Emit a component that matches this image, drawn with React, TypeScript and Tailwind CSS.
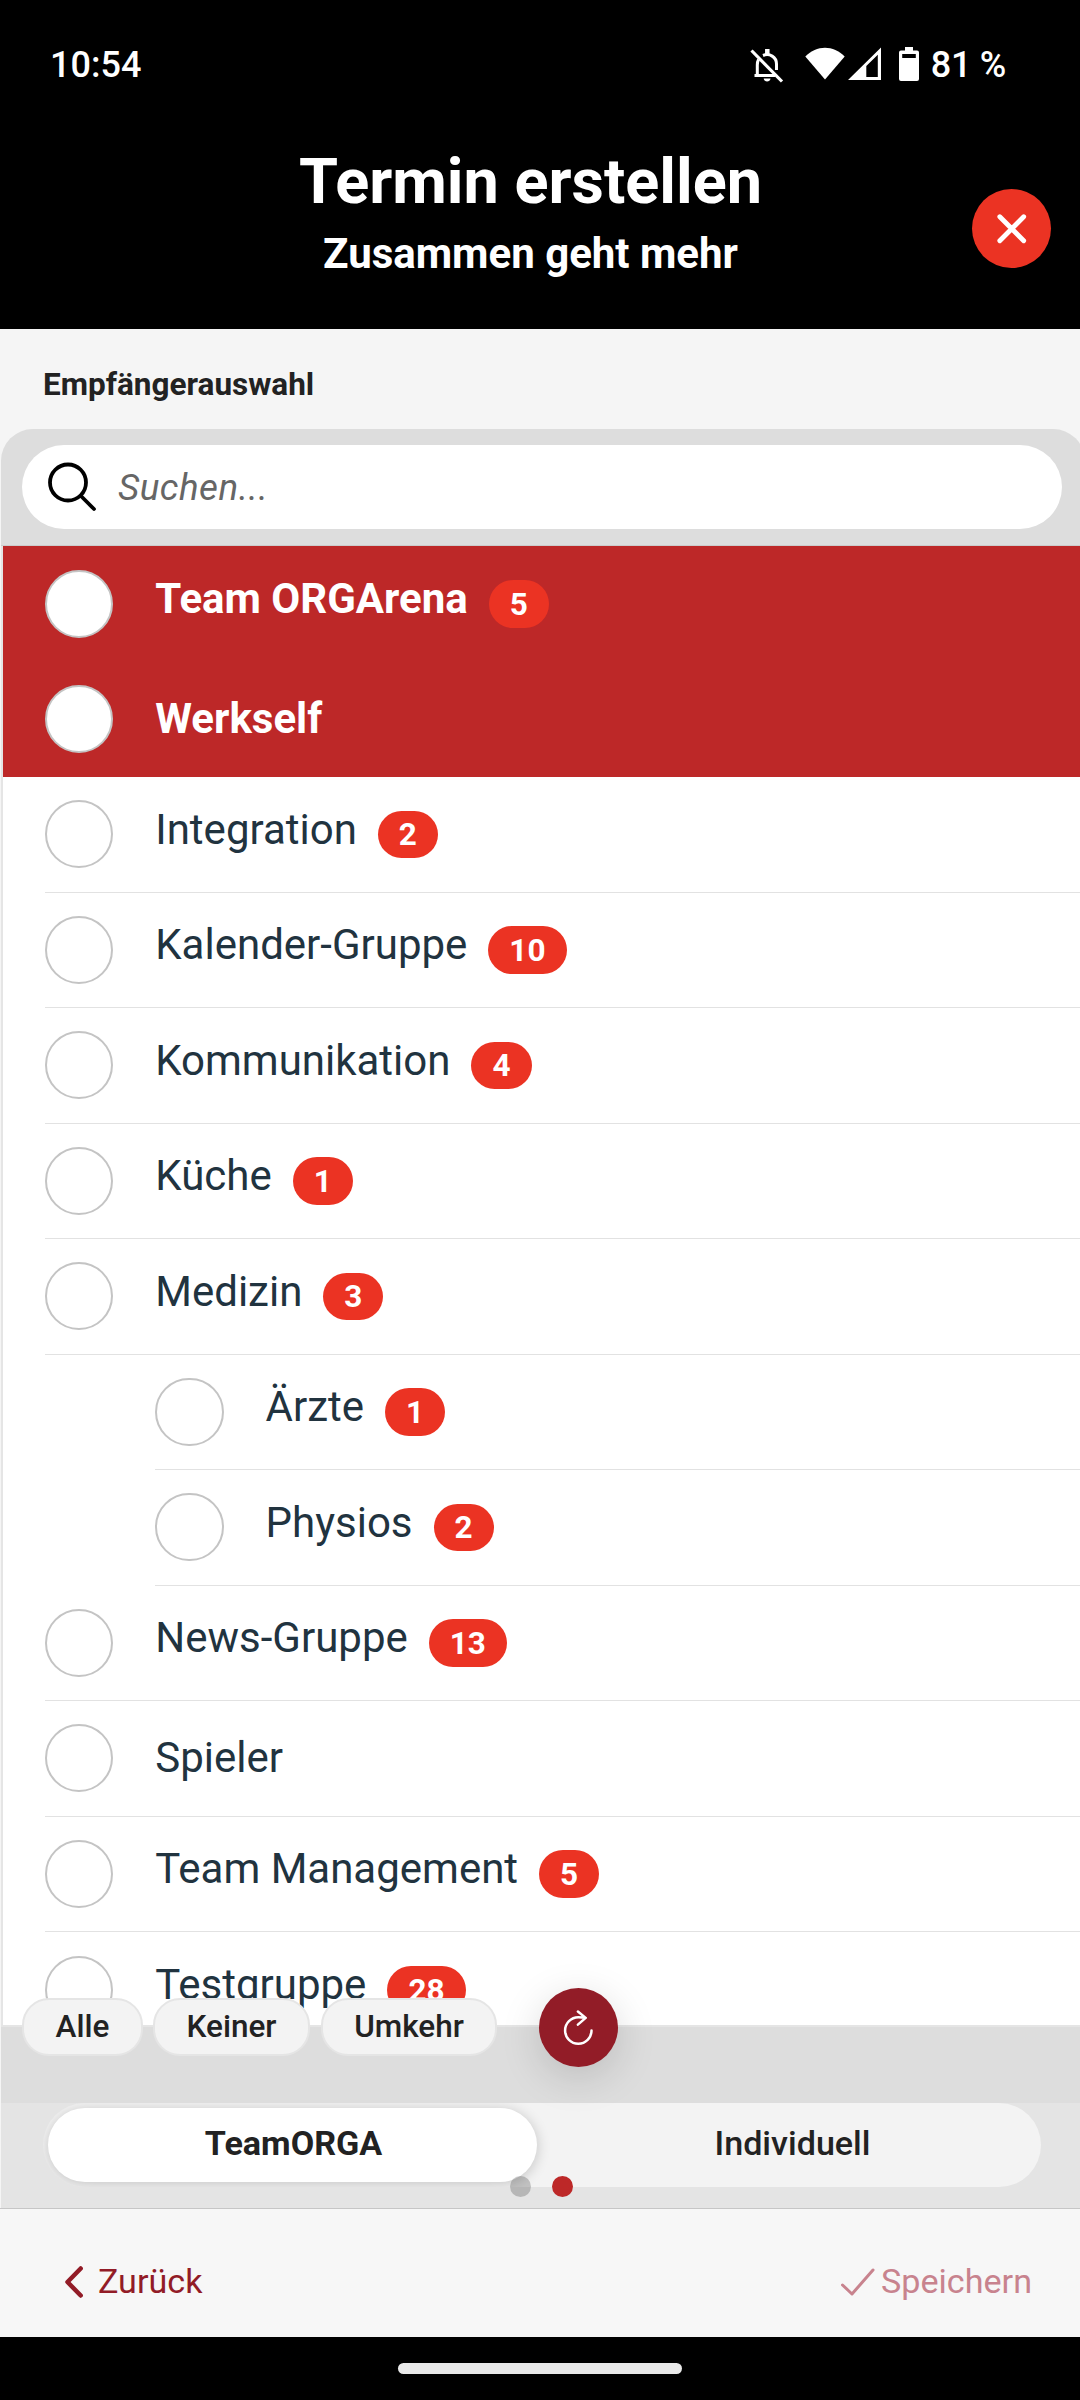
type Group = { name: string; count?: number; child?: boolean; highlight?: boolean };

const groups: Group[] = [
  { name: "Team ORGArena", count: 5, highlight: true },
  { name: "Werkself", highlight: true },
  { name: "Integration", count: 2 },
  { name: "Kalender-Gruppe", count: 10 },
  { name: "Kommunikation", count: 4 },
  { name: "Küche", count: 1 },
  { name: "Medizin", count: 3 },
  { name: "Ärzte", count: 1, child: true },
  { name: "Physios", count: 2, child: true },
  { name: "News-Gruppe", count: 13 },
  { name: "Spieler" },
  { name: "Team Management", count: 5 },
  { name: "Testgruppe", count: 28 },
];

function StatusBar() {
  return (
    <div className="flex h-[130px] items-start justify-between pl-[50px] pr-[74px] pt-[43px] text-[36px] font-medium leading-[44px]">
      <span>10:54</span>
      <div className="flex items-start">
        <svg className="mt-[5px] mr-[21px] h-[35px] w-[34px]" viewBox="0 0 34 35" fill="none" stroke="currentColor" strokeWidth="3">
          <path d="M1.500 2.500L32 33.500" strokeWidth="3.200" />
          <path d="M8.500 11.500C7.600 13.200 7.300 15 7.300 17V27M4.500 27.500H25" />
          <path d="M13 7.500C19.500 4.800 26.500 9 26.500 16V22" />
          <path d="M17.300 1V7" strokeWidth="4.500" />
          <path d="M13.700 30.500H20.500C20.300 34.500 13.900 34.500 13.700 30.500Z" fill="currentColor" stroke="none" />
        </svg>
        <svg className="mt-[4px] h-[35px] w-[40px]" viewBox="0 0 40 35" fill="currentColor">
          <path d="M0.300 9.500C11.500-2.300 28.500-2.300 39.700 9.500L20 32.500Z" />
        </svg>
        <svg className="ml-[3px] mr-[16px] mt-[4px] h-[35px] w-[34px]" viewBox="0 0 34 35" fill="currentColor" fillRule="evenodd">
          <path d="M0 33L33 0.500V33ZM18.300 19V30H29.800V7.800Z" />
        </svg>
        <svg className="mr-[11px] mt-[4px] h-[34px] w-[22px]" viewBox="0 0 22 34" fill="currentColor" fillRule="evenodd">
          <path d="M7 0H15V3.500H19Q21 3.500 21 5.500V32Q21 34 19 34H3Q1 34 1 32V5.500Q1 3.500 3 3.500H7ZM4.200 7V11H17.800V7Z" />
        </svg>
        <span className="whitespace-pre tracking-[-0.3px]">81 %</span>
      </div>
    </div>
  );
}

function Header() {
  return (
    <header className="relative h-[329px] bg-black text-white">
      <StatusBar />
      <div className="flex w-[1061px] flex-col items-center">
        <h1 className="mt-[16px] text-[63px] font-bold leading-[72px]">Termin erstellen</h1>
        <p className="mt-[11px] text-[42px] font-bold leading-[50px]">Zusammen geht mehr</p>
      </div>
      <button className="absolute left-[972px] top-[189px] flex size-[79px] items-center justify-center rounded-full bg-[#eb3323]">
        <svg className="size-[30px]" viewBox="0 0 30 30" fill="none" stroke="currentColor" strokeWidth="4.800" strokeLinecap="round">
          <path d="M2.800 2.800L26.700 26.700M26.700 2.800L2.800 26.700" />
        </svg>
      </button>
    </header>
  );
}

function SearchField() {
  return (
    <div className="h-[117px] rounded-t-[32px] border-b border-[#cccccc] bg-[#dddddd] pl-[21px] pt-[16px]">
      <div className="flex h-[84px] w-[1040px] items-center rounded-full bg-white pl-[26px]">
        <svg className="h-[50px] w-[50px] shrink-0 text-black" viewBox="0 0 50 50" fill="none" stroke="currentColor" strokeWidth="3.800" strokeLinecap="round">
          <circle cx="20" cy="20.500" r="18" />
          <path d="M33 34L46 47" />
        </svg>
        <span className="ml-[20px] pt-px text-[36.750px] italic leading-[44px] tracking-[0.500px] text-[#666666]">Suchen...</span>
      </div>
    </div>
  );
}

function Row({ group, last }: { group: Group; last: boolean }) {
  const { name, count, child, highlight } = group;
  return (
    <li className={`${highlight ? "bg-[#bd2828] font-bold text-white" : "text-[#21333f]"} ${child ? "pl-[152.250px]" : "pl-[42px]"}`}>
      <div className={`flex h-[115.500px] items-center ${highlight || last ? "" : "border-b border-[#e2e2e2]"}`}>
        <span className="size-[68.250px] shrink-0 rounded-full border-2 border-[#c4c4c4] bg-white" />
        <span className={`ml-[42px] text-[42px] leading-[50px] ${count ? "pb-[9px]" : ""}`}>{name}</span>
        {count && (
          <span className="ml-[21px] flex h-[47.500px] items-center rounded-full bg-[#eb3323] px-[21px] pt-px text-[31.500px] font-bold leading-none text-white">
            {count}
          </span>
        )}
      </div>
    </li>
  );
}

function Actions() {
  return (
    <div className="absolute left-[22px] top-[1988px] flex h-[79px] items-center text-[31.500px] font-medium text-[#222222]">
      <div className="mb-px flex">
        <button className="flex h-[58px] w-[121px] items-center justify-center rounded-[27px] border-2 border-[#e5e5e5] bg-[#f3f3f3] pb-px">Alle</button>
        <button className="ml-[10px] flex h-[58px] w-[157px] items-center justify-center rounded-[27px] border-2 border-[#e5e5e5] bg-[#f3f3f3] pb-px">Keiner</button>
        <button className="ml-[11px] flex h-[58px] w-[176px] items-center justify-center rounded-[27px] border-2 border-[#e5e5e5] bg-[#f3f3f3] pb-px">Umkehr</button>
      </div>
      <button className="ml-[42px] flex size-[79px] items-center justify-center rounded-full bg-[#921c27] text-white shadow-[0_10px_40px_rgba(0,0,0,0.15)]">
        <svg className="h-[38px] w-[32px]" viewBox="0 0 32 38" fill="none" stroke="currentColor" strokeWidth="2.500" strokeLinecap="round" strokeLinejoin="round">
          <path d="M28.500 21.500A13.200 13.200 0 1 1 15.300 8.300Q19.200 8.300 22.700 8.900M14.900 2.500L22.700 8.900L14.900 15.600" />
        </svg>
      </button>
    </div>
  );
}

function Segmented() {
  return (
    <div className="h-[105px] bg-[#e4e4e4] pl-[42px]">
      <div className="flex h-[84px] w-[998px] overflow-hidden rounded-full bg-[#f3f3f3] p-[5px] text-[34.125px] leading-[70px] text-[#222222]">
        <button className="h-[74px] w-[489px] rounded-full bg-white pb-[4px] pl-[2px] font-bold shadow-[0_2px_14px_rgba(0,0,0,0.2)]">TeamORGA</button>
        <button className="ml-[10px] h-[74px] flex-1 pb-[4px] pl-[2px] font-medium">Individuell</button>
      </div>
    </div>
  );
}

export default function App() {
  return (
    <div className="relative h-[2400px] w-[1080px] overflow-hidden bg-[#f5f5f5] font-['Roboto',sans-serif]">
      <Header />
      <h2 className="h-[100px] pl-[43px] pt-[37px] text-[31.500px] font-bold leading-[38px] text-[#222222]">Empfängerauswahl</h2>
      <main className="ml-px w-[1084px]">
        <SearchField />
        <ul className="h-[1479px] overflow-hidden border-l-2 border-[#e5e5e5] bg-white">
          {groups.map((group, i) => (
            <Row key={group.name} group={group} last={i === groups.length - 1} />
          ))}
        </ul>
        <div className="h-[78px] border-t-2 border-[#e5e5e5] bg-[#dddddd]" />
        <Segmented />
      </main>
      <Actions />
      <div className="absolute left-[510px] top-[2176px] flex gap-[21px]">
        <span className="size-[21px] rounded-full bg-black/20" />
        <span className="size-[21px] rounded-full bg-[#bd2828]" />
      </div>
      <footer className="flex h-[129px] items-center justify-between border-t border-[#c6c6c6] bg-[#f7f7f7] pl-[65px] pr-[48px] pt-[17px] text-[34.125px] text-[#921c27]">
        <button className="flex items-center">
          <svg className="h-[32px] w-[18px]" viewBox="0 0 18 32" fill="none" stroke="currentColor" strokeWidth="4.500" strokeLinecap="round" strokeLinejoin="round">
            <path d="M15.700 2.500L2.500 16L15.700 29.500" />
          </svg>
          <span className="ml-[15px] pb-px leading-[42px]">Zurück</span>
        </button>
        <button className="flex items-center text-[#c8838e]">
          <svg className="h-[28px] w-[34px]" viewBox="0 0 34 28" fill="none" stroke="currentColor" strokeWidth="3" strokeLinecap="round" strokeLinejoin="round">
            <path d="M1.500 17L11 26L32 2" />
          </svg>
          <span className="ml-[6px] pb-px leading-[42px]">Speichern</span>
        </button>
      </footer>
      <div className="flex h-[63px] justify-center bg-black pt-[26px]">
        <div className="h-[11px] w-[284px] rounded-full bg-[#e9e9e9]" />
      </div>
    </div>
  );
}
